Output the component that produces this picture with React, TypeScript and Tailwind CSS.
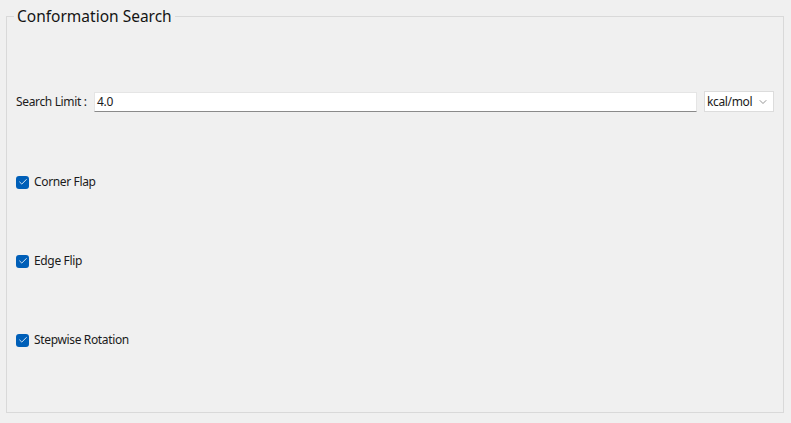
import { Check, ChevronDown } from "lucide-react";

const options = ["Corner Flap", "Edge Flip", "Stepwise Rotation"];

function CheckRow({ label, first }: { label: string; first?: boolean }) {
  return (
    <div className={`flex items-center h-[16px] ${first ? "mt-[62px]" : "mt-[63px]"}`}>
      <span className="flex items-center justify-center w-[13px] h-[13px] rounded-[3px] bg-[#005fb8]">
        <Check className="w-[10px] h-[10px] text-white" strokeWidth={2} />
      </span>
      <span className="ml-[5px] text-[12px] tracking-[-0.35px] text-[#1b1b1b]">{label}</span>
    </div>
  );
}

export default function App() {
  return (
    <div
      className="w-[791px] h-[423px] bg-[#f0f0f0] pt-[6px] pl-[6px]"
      style={{ fontFamily: '"Noto Sans", "Segoe UI", sans-serif' }}
    >
      <fieldset className="w-[778px] h-[407px] border border-[#d9d9d9] pl-[9px] pr-[9px]">
        <legend className="-ml-[2px] px-[3px] text-[15.5px] leading-[20px] text-[#141414]">
          Conformation Search
        </legend>

        <div className="flex items-center mt-[65px] h-[21px]">
          <span className="text-[12px] tracking-[-0.35px] text-[#1b1b1b] w-[78px]">Search Limit :</span>
          <div className="w-[603px] h-[20px] bg-white border border-[#e5e5e5] border-b-[#8a8a8a] flex items-center px-[2px] text-[12px] tracking-[-0.35px] text-[#1b1b1b]">
            4.0
          </div>
          <div className="ml-[7px] w-[70px] h-[21px] bg-white border border-[#dcdcdc] flex items-center justify-between pl-[2px] pr-[4px] text-[12px] tracking-[-0.35px] text-[#1b1b1b]">
            <span>kcal/mol</span>
            <ChevronDown className="w-[12px] h-[12px] text-[#707070]" strokeWidth={1.5} />
          </div>
        </div>

        {options.map((o, i) => (
          <CheckRow key={o} label={o} first={i === 0} />
        ))}
      </fieldset>
    </div>
  );
}
